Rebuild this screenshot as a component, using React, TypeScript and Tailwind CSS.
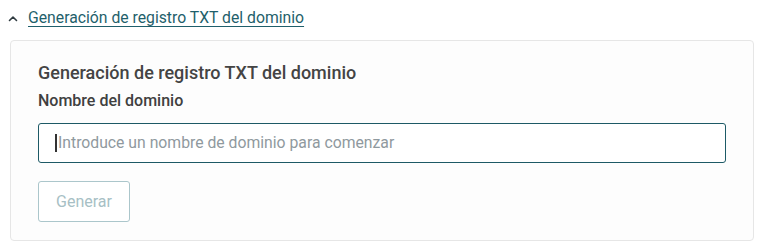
import React from "react";

export default function App() {
  return (
    <div className="w-[764px] h-[251px] bg-white" style={{ fontFamily: "Roboto, 'Liberation Sans', sans-serif" }}>
      <div className="flex items-center h-[40px] pl-[8px] pb-[4px]">
        <svg width="10" height="10" viewBox="0 0 10 10" className="mr-[10px] mt-[1px]">
          <path d="M1.5 6.5 L5 3 L8.5 6.5" fill="none" stroke="#2f3b40" strokeWidth="1.6" strokeLinecap="round" strokeLinejoin="round" />
        </svg>
        <a href="#" className="text-[15.75px] leading-[20px] text-[#1f5f6b] underline underline-offset-[3px] decoration-1">
          Generación de registro TXT del dominio
        </a>
      </div>
      <div className="mx-[10px] w-[744px] h-[201px] border border-[#e6e6e6] rounded-[4px] bg-[#fdfdfd] pl-[27px] pr-[27px] pt-[20px]">
        <h2 className="text-[18px] leading-[24px] font-medium text-[#444444]">
          Generación de registro TXT del dominio
        </h2>
        <label className="block mt-[6px] text-[16px] leading-[20px] font-medium text-[#404040]">
          Nombre del dominio
        </label>
        <div className="mt-[12px] h-[40px] w-[688px] border border-[#1d5a66] rounded-[3px] flex items-center pl-[16px] bg-white">
          <span className="w-[2px] h-[18px] bg-[#333] mr-[1px]" />
          <span className="text-[15.75px] text-[#8f999e]">Introduce un nombre de dominio para comenzar</span>
        </div>
        <button className="mt-[18px] h-[41px] w-[92px] border border-[#abc6cb] rounded-[3px] text-[16px] text-[#a7bfc5] bg-white">
          Generar
        </button>
      </div>
    </div>
  );
}
